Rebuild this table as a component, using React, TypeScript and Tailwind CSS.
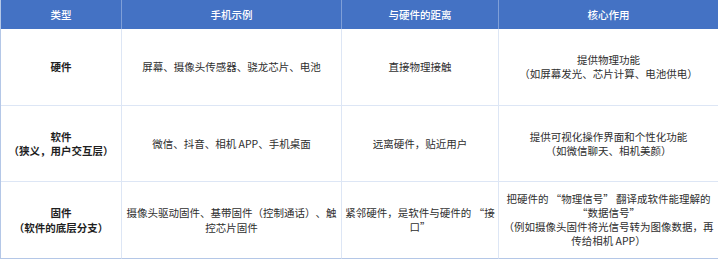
import React from 'react';

const headers = ['类型', '手机示例', '与硬件的距离', '核心作用'];

type Cell = { lines: string[]; bold?: boolean; leading?: string };

const rows: { h: string; cells: Cell[] }[] = [
  {
    h: 'h-[77px]',
    cells: [
      { lines: ['硬件'], bold: true },
      { lines: ['屏幕、摄像头传感器、骁龙芯片、电池'] },
      { lines: ['直接物理接触'] },
      { lines: ['提供物理功能', '（如屏幕发光、芯片计算、电池供电）'] },
    ],
  },
  {
    h: 'h-[76px]',
    cells: [
      { lines: ['软件', '（狭义，用户交互层）'], bold: true },
      { lines: ['微信、抖音、相机 APP、手机桌面'] },
      { lines: ['远离硬件，贴近用户'] },
      { lines: ['提供可视化操作界面和个性化功能', '（如微信聊天、相机美颜）'] },
    ],
  },
  {
    h: 'h-[77px]',
    cells: [
      { lines: ['固件', '（软件的底层分支）'], bold: true, leading: 'leading-[15px]' },
      { lines: ['摄像头驱动固件、基带固件（控制通话）、触', '控芯片固件'], leading: 'leading-[15px]' },
      { lines: ['紧邻硬件，是软件与硬件的 “接', '口”'] },
      {
        lines: [
          '把硬件的 “物理信号” 翻译成软件能理解的',
          '“数据信号”',
          '（例如摄像头固件将光信号转为图像数据，再',
          '传给相机 APP）',
        ],
      },
    ],
  },
];

export default function App() {
  return (
    <div
      lang="zh-CN"
      className="w-[718px] h-[260px] bg-white text-[10.5px] text-[#2e2e2e] [text-spacing-trim:space-all]"
      style={{ fontFamily: '"Noto Sans CJK SC", "Liberation Sans", sans-serif' }}
    >
      <div className="grid grid-cols-[121px_220px_157px_220px] border-l border-[#b4c7e7]">
        {/* header */}
        {headers.map((t, i) => (
          <div
            key={t}
            className={`h-[29px] flex items-center justify-center bg-[#4472c4] text-white font-medium ${
              i < 3 ? 'border-r border-[#7f9fd8]' : 'border-r border-[#b4c7e7]'
            }`}
          >
            {t}
          </div>
        ))}

        {/* body */}
        {rows.map((r, ri) =>
          r.cells.map((c, ci) => (
            <div
              key={`${ri}-${ci}`}
              className={`${r.h} flex flex-col items-center justify-center text-center px-[2px] ${
                c.leading ?? 'leading-[14px]'
              } ${c.bold ? 'font-bold text-[#1f1f1f]' : ''} border-b ${
                ri === 2 ? 'border-[#b4c7e7]' : 'border-b-[#dde6f5]'
              } border-r ${ci === 3 ? 'border-r-[#b4c7e7]' : 'border-r-[#dde6f5]'}`}
            >
              {c.lines.map((l) => (
                <div key={l} className="whitespace-nowrap">
                  {l}
                </div>
              ))}
            </div>
          ))
        )}
      </div>
    </div>
  );
}
